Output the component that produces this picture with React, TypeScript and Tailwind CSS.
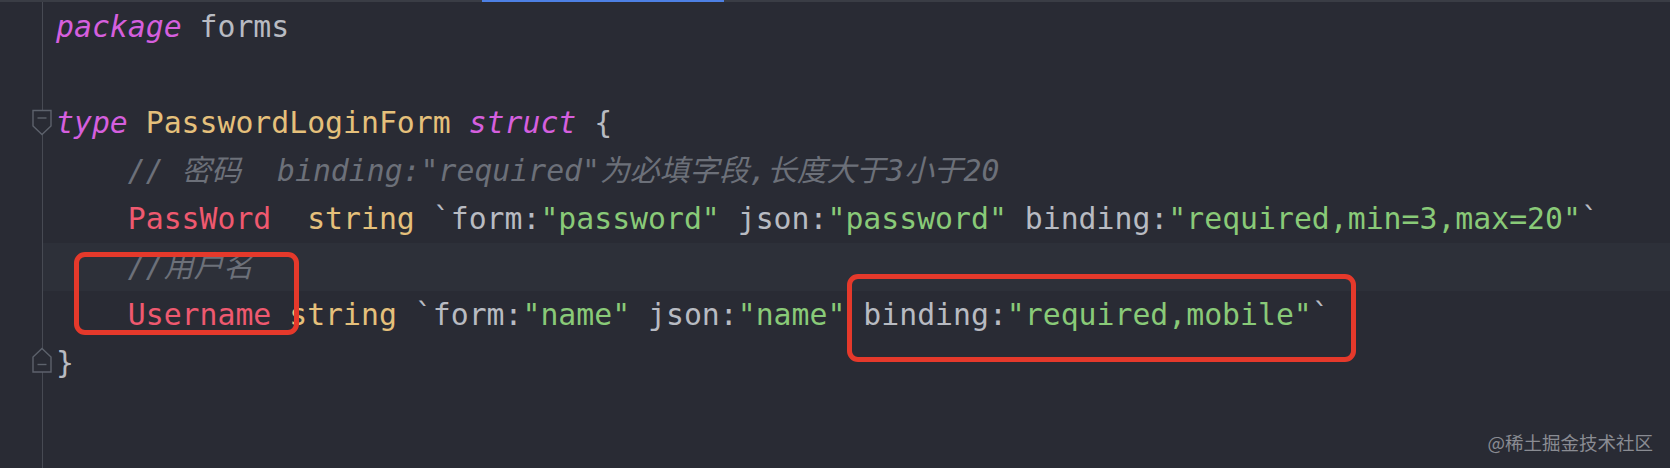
import React from 'react';

type Tok = { t: string; c: string; i?: boolean };

const KW = 'text-[#d55fde]';
const FG = 'text-[#b8bbc2]';
const TY = 'text-[#e5c07b]';
const FD = 'text-[#ef596f]';
const ST = 'text-[#89ca78]';
const CM = 'text-[#6c7079]';

const lines: Tok[][] = [
  [{ t: 'package', c: KW, i: true }, { t: ' forms', c: FG }],
  [],
  [
    { t: 'type', c: KW, i: true },
    { t: ' ', c: FG },
    { t: 'PasswordLoginForm', c: TY },
    { t: ' ', c: FG },
    { t: 'struct', c: KW, i: true },
    { t: ' {', c: FG },
  ],
  [{ t: '    // 密码  binding:"required"为必填字段,长度大于3小于20', c: CM, i: true }],
  [
    { t: '    ', c: FG },
    { t: 'PassWord', c: FD },
    { t: '  ', c: FG },
    { t: 'string', c: TY },
    { t: ' `form:', c: FG },
    { t: '"password"', c: ST },
    { t: ' json:', c: FG },
    { t: '"password"', c: ST },
    { t: ' binding:', c: FG },
    { t: '"required,min=3,max=20"', c: ST },
    { t: '`', c: FG },
  ],
  [{ t: '    //用户名', c: CM, i: true }],
  [
    { t: '    ', c: FG },
    { t: 'Username', c: FD },
    { t: ' ', c: FG },
    { t: 'string', c: TY },
    { t: ' `form:', c: FG },
    { t: '"name"', c: ST },
    { t: ' json:', c: FG },
    { t: '"name"', c: ST },
    { t: ' binding:', c: FG },
    { t: '"required,mobile"', c: ST },
    { t: '`', c: FG },
  ],
  [{ t: '}', c: FG }],
];

// fold markers sit over the gutter line
function FoldOpen() {
  return (
    <svg width="22" height="28" viewBox="0 0 22 28" className="absolute left-[31px] top-[10px] z-10">
      <path d="M2 1.5 H20 V17 L11 25.5 L2 17 Z" fill="#292b34" stroke="#5d626c" strokeWidth="1.4" />
      <path d="M6.5 9 H15.5" stroke="#5d626c" strokeWidth="1.4" />
    </svg>
  );
}

function FoldClose() {
  return (
    <svg width="22" height="28" viewBox="0 0 22 28" className="absolute left-[31px] top-[8px] z-10">
      <path d="M11 1.5 L20 10 V25 H2 V10 Z" fill="#292b34" stroke="#5d626c" strokeWidth="1.4" />
      <path d="M6.5 17.5 H15.5" stroke="#5d626c" strokeWidth="1.4" />
    </svg>
  );
}

export default function App() {
  return (
    <div className="relative flex h-[468px] w-[1670px] flex-col overflow-hidden bg-[#292b34]">
      <div className="flex h-[2px] shrink-0 bg-[#3a3d45]">
        <div className="ml-[482px] w-[242px] bg-[#4d80e4]" />
      </div>
      <div className="flex h-[1px] shrink-0">
        <div className="w-[43px] border-r border-[#474a53]" />
      </div>
      <div
        className="whitespace-pre text-[29.8px] leading-[48px]"
        style={{ fontFamily: '"DejaVu Sans Mono", "Noto Sans CJK SC", monospace' }}
      >
        {lines.map((toks, n) => (
          <div key={n} className="flex h-[48px]">
            <div className="relative w-[43px] shrink-0 border-r border-[#474a53]">
              {n === 2 && <FoldOpen />}
              {n === 7 && <FoldClose />}
            </div>
            <div className={`flex-1 pl-[13px] ${n === 5 ? 'bg-[#2d3039]' : ''}`}>
              {toks.map((k, j) => (
                <span key={j} className={`${k.c} ${k.i ? 'italic' : ''}`}>
                  {k.t}
                </span>
              ))}
            </div>
          </div>
        ))}
      </div>
      <div className="flex flex-1">
        <div className="w-[43px] border-r border-[#474a53]" />
      </div>

      <div className="absolute left-[74px] top-[252px] h-[83px] w-[225px] rounded-[11px] border-[5px] border-[#e5392b]" />
      <div className="absolute left-[847px] top-[274px] h-[88px] w-[509px] rounded-[11px] border-[5px] border-[#e5392b]" />

      <div
        className="absolute right-[17px] top-[429px] text-[18.5px] leading-[26px] text-[#8a8c93]"
        style={{ fontFamily: '"Noto Sans CJK SC", sans-serif' }}
      >
        @稀土掘金技术社区
      </div>
    </div>
  );
}
